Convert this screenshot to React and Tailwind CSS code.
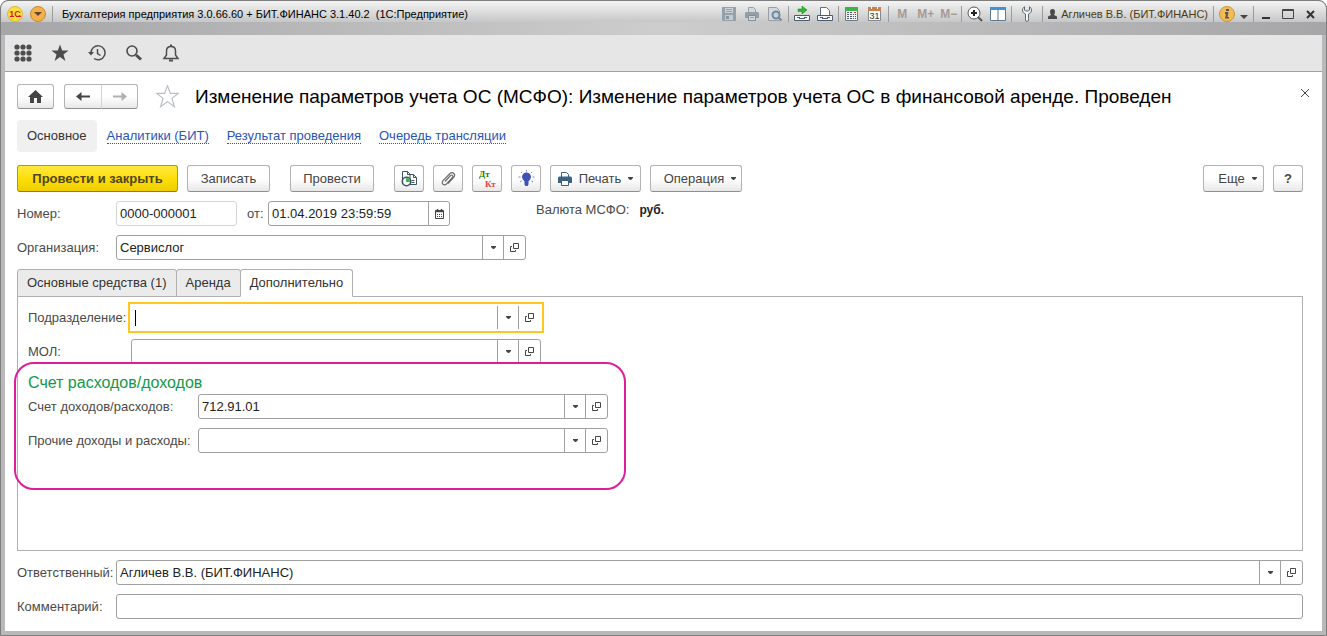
import React, { useState } from "react";

const buttonClass =
  "flex items-center justify-center rounded-[3px] border border-[#b3b3b3] border-b-[#8f8f8f] bg-gradient-to-b from-white from-50% to-[#e8e8e8] text-[13px] text-[#454545]";

const Separator = () => <span className="h-4 w-px shrink-0 bg-[#9c9c9c]" />;

const Caret = () => (
  <svg className="h-1 w-[5px] shrink-0" viewBox="0 0 5 4" fill="#454545">
    <path d="M0 0h5v1L3 3H2L0 1z" />
  </svg>
);

const OpenIcon = () => (
  <svg className="h-[9px] w-[9px]" viewBox="0 0 9 9" fill="none" stroke="#454545">
    <path d="M3.500 0.500h5v5h-5z" />
    <path d="M2 3.500H0.500v5h5V7" />
  </svg>
);

const SaveIcon = () => (
  <svg className="h-4 w-4" viewBox="0 0 16 16">
    <path d="M1 1h14v14H2l-1-1z" fill="#94a1ac" />
    <path d="M4 2h8v5H4z" fill="#ccd2d6" />
    <path d="M5 3.500h6M5 5.500h6" stroke="#94a1ac" />
    <path d="M4 9h8v5H4z" fill="#c3cad0" />
    <path d="M5 10h3v3H5z" fill="#8795a2" />
  </svg>
);

const TitlePrinterIcon = () => (
  <svg className="h-4 w-4" viewBox="0 0 16 16">
    <path d="M4.500 1.500h5l2 2v3h-7z" fill="#d5d9dc" stroke="#93a0aa" />
    <path d="M2 6h12l1 1v5H1V7z" fill="#93a0aa" />
    <path d="M4.500 9.500h7v5h-7z" fill="#d5d9dc" stroke="#7f8e9a" />
    <path d="M6 11.500h4" stroke="#93a0aa" />
  </svg>
);

const PreviewIcon = () => (
  <svg className="h-4 w-4" viewBox="0 0 16 16" fill="none">
    <path d="M1.500 1.500h8l3 3v10h-11z" fill="#d4d8db" stroke="#93a0aa" />
    <circle cx="9" cy="9" r="3.500" fill="#c5d2da" stroke="#73899a" strokeWidth="2" />
    <path d="M11.500 11.500l3 3" stroke="#73899a" strokeWidth="2" />
  </svg>
);

const LinkIcon = ({ children }) => (
  <svg className="h-4 w-4" viewBox="0 0 16 16" fill="none">
    {children}
    <path d="M0.500 9.500h15v5h-15z" fill="#f5f7f9" stroke="#4d5b6b" />
    <path d="M3 11.500h3M10 11.500h3" stroke="#4d5b6b" />
    <path d="M5 12.500h6" stroke="#4d5b6b" />
  </svg>
);

const CalculatorIcon = () => (
  <svg className="h-4 w-4" viewBox="0 0 16 16">
    <path d="M1.500 1.500h12v13h-12z" fill="#f3f3f3" stroke="#6d7a85" />
    <path d="M1 1h13v4H1z" fill="#3fb14b" />
    <path
      d="M3 6.500h2M6 6.500h2M3 8.500h2M6 8.500h2M9 8.500h1M3 10.500h2M6 10.500h2M9 10.500h1M3 12.500h2M6 12.500h2M9 12.500h1M11 8.500h1M11 10.500h1M11 12.500h1"
      stroke="#4d5b66"
    />
    <path d="M10 6.500h2" stroke="#e03030" />
  </svg>
);

const TitleCalendarIcon = () => (
  <svg className="h-4 w-4" viewBox="0 0 16 16">
    <path d="M1.500 2.500h12v12h-12z" fill="#fbfbfb" stroke="#7d8992" />
    <path d="M1 1h13v4H1z" fill="#c68350" />
    <path d="M4.500 0v3M10.500 0v3" stroke="#fff" />
    <text x="7.500" y="13" textAnchor="middle" fontSize="9" fontFamily="Liberation Sans" fill="#333">
      31
    </text>
  </svg>
);

const ZoomIcon = () => (
  <svg className="h-4 w-4" viewBox="0 0 16 16" fill="none">
    <circle cx="7" cy="7" r="6" fill="#fff" stroke="#555" />
    <path d="M4 7h6M7 4v6" stroke="#222" strokeWidth="2" />
    <path d="M11 11l4 4" stroke="#555" strokeWidth="2" />
  </svg>
);

const PanelsIcon = () => (
  <svg className="h-4 w-4" viewBox="0 0 16 16">
    <path d="M0.500 1.500h15v13h-15z" fill="#fff" stroke="#61788c" />
    <path d="M0 1h16v3H0z" fill="#3d93e0" />
    <path d="M8 4v11" stroke="#61788c" />
  </svg>
);

const WrenchIcon = () => (
  <svg className="h-4 w-3" viewBox="0 0 12 16" fill="#f6f6f6" stroke="#5b6873">
    <path d="M3.500 0.800Q1 2 1.500 5 2 7 4.500 8v4.500q-.5 3 1.500 3t1.500-3V8Q10 7 10.500 5 11 2 8.500 0.800V4L7.500 5h-3l-1-1z" />
  </svg>
);

const UserIcon = () => (
  <svg className="h-[11px] w-[9px]" viewBox="0 0 9 11" fill="#4a4a4a">
    <path d="M2 2.500Q2 0 4.500 0T7 2.500q0 2-1 3.500l3 1.500V10H0V7.500L3 6q-1-1.500-1-3.500z" />
  </svg>
);

const TitleBar = () => (
  <header className="h-[34px] shrink-0 bg-gradient-to-r from-[#a6a6a9] via-[#cdcdcd] to-[#a6a6a9] text-[11px]">
    <div className="flex h-[21px] items-end rounded-t-lg bg-gradient-to-b from-[#f4f4f4] to-[#c6c7c8] px-[5px]">
      <div className="flex h-4 min-w-0 flex-1 items-center">
        <svg className="h-4 w-[18px] shrink-0" viewBox="0 0 18 16">
          <circle cx="9" cy="8" r="7.500" fill="#f9e03c" stroke="#d8b93a" />
          <text x="9" y="11" textAnchor="middle" fontSize="9" fontWeight="bold" fontFamily="Liberation Sans" fill="#e0181c">
            1С
          </text>
          <path d="M10 10.500h5" stroke="#e0181c" />
        </svg>
        <button type="button" aria-label="Главное меню" className="ml-1.5">
          <svg className="h-4 w-4" viewBox="0 0 16 16">
            <circle cx="8" cy="8" r="7.500" fill="#f3b04b" stroke="#c98a2d" />
            <path d="M4 6h8l-4 4z" fill="#60452a" />
          </svg>
        </button>
        <span className="ml-1.5 h-4 w-px shrink-0 bg-[#9c9c9c]" />
        <span className="ml-[9px] truncate whitespace-pre text-black">
          Бухгалтерия предприятия 3.0.66.60 + БИТ.ФИНАНС 3.1.40.2  (1С:Предприятие)
        </span>
      </div>
      <div className="flex h-4 shrink-0 items-center gap-[5px]">
        <div className="flex gap-[7px]">
          <button type="button" aria-label="Сохранить"><SaveIcon /></button>
          <button type="button" aria-label="Печать"><TitlePrinterIcon /></button>
          <button type="button" aria-label="Просмотр"><PreviewIcon /></button>
        </div>
        <Separator />
        <div className="flex gap-[7px]">
          <button type="button" aria-label="Перейти по ссылке">
            <LinkIcon>
              <path d="M4 3h4V0l5 4-5 4V5.500H4z" fill="#2fb92f" stroke="#177d17" strokeWidth="0.500" />
            </LinkIcon>
          </button>
          <button type="button" aria-label="Получить ссылку">
            <LinkIcon>
              <path d="M3.500 9V1.500h6l3 3V9" fill="#fff" stroke="#5f7285" />
            </LinkIcon>
          </button>
        </div>
        <Separator />
        <div className="flex gap-[7px]">
          <button type="button" aria-label="Калькулятор"><CalculatorIcon /></button>
          <button type="button" aria-label="Календарь"><TitleCalendarIcon /></button>
        </div>
        <Separator />
        <div className="flex gap-[7px] text-[12px] font-bold text-[#a89a90]">
          <button type="button" className="w-4">M</button>
          <button type="button" className="w-4">M+</button>
          <button type="button" className="w-4">M−</button>
        </div>
        <Separator />
        <div className="flex gap-[7px]">
          <button type="button" aria-label="Масштаб"><ZoomIcon /></button>
          <button type="button" aria-label="Панели"><PanelsIcon /></button>
        </div>
        <Separator />
        <button type="button" aria-label="Настройки" className="px-1"><WrenchIcon /></button>
        <Separator />
        <button type="button" className="flex items-center gap-1 text-[#4d3a10]">
          <UserIcon />
          Агличев В.В. (БИТ.ФИНАНС)
        </button>
        <Separator />
        <button type="button" aria-label="Информация">
          <svg className="h-4 w-4" viewBox="0 0 16 16">
            <circle cx="8" cy="8" r="7.500" fill="#f2bb55" stroke="#c9953d" />
            <path d="M7 3h3v2H7zM6 6h3.500L8.500 11H10v1.500H6L7 8H6z" fill="#5d5648" />
          </svg>
        </button>
        <button type="button" aria-label="Еще" className="pt-1.5">
          <svg className="h-1 w-2" viewBox="0 0 8 4" fill="#444"><path d="M0 0h8L4 4z" /></svg>
        </button>
        <Separator />
        <div className="flex items-center gap-3 pr-1.5 pl-[3px]">
          <button type="button" aria-label="Свернуть" className="pt-1.5">
            <svg className="h-[3px] w-2" viewBox="0 0 8 3"><path d="M0 1h8v2H0z" fill="#333" /></svg>
          </button>
          <button type="button" aria-label="Развернуть">
            <svg className="h-2.5 w-3" viewBox="0 0 12 10"><path d="M.5 .5h11v9H.5zM0 1.500h12" fill="none" stroke="#444" /></svg>
          </button>
          <button type="button" aria-label="Закрыть">
            <svg className="h-[9px] w-[9px]" viewBox="0 0 9 9"><path d="M1 1l7 7M8 1L1 8" stroke="#333" strokeWidth="2" /></svg>
          </button>
        </div>
      </div>
    </div>
  </header>
);

const starPath = "M9 0.500l2.200 6h6.300l-5 4 1.900 6.500L9 13l-5.400 4 1.900-6.500-5-4h6.300z";

const ToolBar = () => (
  <nav className="flex h-[37px] shrink-0 items-center gap-[19px] border-b border-[#a0a0a0] bg-[#e6e6e6] pl-[9px]">
    <button type="button" aria-label="Разделы">
      <svg className="h-[18px] w-[18px]" viewBox="0 0 18 18" fill="#4d4d4d">
        {[3, 9, 15].map((y) =>
          [3, 9, 15].map((x) => <circle key={`${x}-${y}`} cx={x} cy={y} r="2.600" />)
        )}
      </svg>
    </button>
    <button type="button" aria-label="Избранное">
      <svg className="h-[18px] w-[18px]" viewBox="0 0 18 18" fill="#4d4d4d"><path d={starPath} /></svg>
    </button>
    <button type="button" aria-label="История">
      <svg className="h-[18px] w-[18px]" viewBox="0 0 18 18" fill="none" stroke="#4d4d4d" strokeWidth="1.500">
        <path d="M3 9A7 7 0 1 1 6 14.500" />
        <path d="M9.500 5v4.500l3 2" />
        <path d="M0 8h6L3 11.500z" fill="#4d4d4d" stroke="none" />
      </svg>
    </button>
    <button type="button" aria-label="Поиск">
      <svg className="h-[18px] w-[18px]" viewBox="0 0 18 18" fill="none" stroke="#4d4d4d">
        <circle cx="7" cy="7" r="5" strokeWidth="1.600" />
        <path d="M11 11l5 4.500" strokeWidth="3" />
      </svg>
    </button>
    <button type="button" aria-label="Уведомления">
      <svg className="h-[18px] w-[18px]" viewBox="0 0 18 18" fill="none" stroke="#4d4d4d" strokeWidth="1.500">
        <path d="M2 14.500h14L13.500 11V7Q13.500 2.500 9 2.500T4.500 7v4z" />
        <path d="M7 16.500h4M9 0.500v2" strokeWidth="2" />
      </svg>
    </button>
  </nav>
);

const FormHeader = () => (
  <div className="flex h-[25px] items-center">
    <button type="button" aria-label="Начальная страница" className={`${buttonClass} h-[25px] w-[37px]`}>
      <svg className="h-[13px] w-[15px]" viewBox="0 0 15 13" fill="#454545">
        <path d="M7.500 0L15 7h-2v6H9V8H6v5H2V7H0z" />
      </svg>
    </button>
    <div className="ml-2.5 flex">
      <button type="button" aria-label="Назад" className={`${buttonClass} h-[25px] w-[38px] rounded-r-none`}>
        <svg className="h-[9px] w-[14px]" viewBox="0 0 14 9"><path d="M0 4.500L5.500 0v3.500H14v2H5.500V9z" fill="#454545" /></svg>
      </button>
      <button type="button" aria-label="Вперед" className={`${buttonClass} -ml-px h-[25px] w-[37px] rounded-l-none border-l-[#d5d5d5]`}>
        <svg className="h-[9px] w-[14px]" viewBox="0 0 14 9"><path d="M14 4.500L8.500 0v3.500H0v2h8.500V9z" fill="#b0b0b0" /></svg>
      </button>
    </div>
    <button type="button" aria-label="В избранное" className="ml-[18px]">
      <svg className="h-[23px] w-[23px]" viewBox="0 0 18 18" fill="none" stroke="#b9bec4" strokeWidth="0.900"><path d={starPath} /></svg>
    </button>
    <h1 className="ml-4 min-w-0 flex-1 truncate text-[19px] leading-6 text-black">
      Изменение параметров учета ОС (МСФО): Изменение параметров учета ОС в финансовой аренде. Проведен
    </h1>
    <button type="button" aria-label="Закрыть форму" className="-mr-2.5 mb-2 p-1">
      <svg className="h-2 w-2" viewBox="0 0 8 8"><path d="M0 0l8 8M8 0L0 8" stroke="#454545" /></svg>
    </button>
  </div>
);

const SectionLinks = () => (
  <nav className="mt-[11px] flex h-8 items-center gap-[18px] text-[13px]">
    <span className="-mr-2 flex h-8 items-center rounded bg-[#f0f0f0] px-2.5 text-[#333]">Основное</span>
    {["Аналитики (БИТ)", "Результат проведения", "Очередь трансляции"].map((title) => (
      <a key={title} href="#" className="border-b border-dotted border-[#2b54b5] leading-[14px] text-[#2b54b5]">
        {title}
      </a>
    ))}
  </nav>
);

const CommandBar = () => (
  <div className="mt-[13px] flex">
    <button
      type="button"
      className="h-[27px] w-[161px] rounded-[3px] border border-[#b09a10] border-b-[#8f7d0c] bg-gradient-to-b from-[#ffe838] via-[#fddf05] to-[#efcd00] text-[13px] font-bold text-[#504620]"
    >
      Провести и закрыть
    </button>
    <button type="button" className={`${buttonClass} ml-[9px] h-[27px] w-[83px]`}>Записать</button>
    <button type="button" className={`${buttonClass} ml-5 h-[27px] w-[84px]`}>Провести</button>
    <div className="ml-5 flex gap-[9px]">
      <button type="button" aria-label="Отчет" className={`${buttonClass} h-[27px] w-[30px]`}>
        <svg className="h-[17px] w-[17px]" viewBox="0 0 17 17" fill="none" stroke="#3e5463">
          <path d="M1.500 9V1.500h5l3 3M8.500 4.500h4l3 3v7H9V4.500" fill="#fff" />
          <path d="M6.500 1.500v3h3M12.500 4.500v3h3M10.500 10.500h3M10.500 12.500h3" />
          <circle cx="5.500" cy="11.500" r="4.200" fill="#fff" strokeWidth="1.600" />
          <path d="M5.500 11.500v-3a3 3 0 0 1 3 3z" fill="#2eb84b" stroke="#2eb84b" />
        </svg>
      </button>
      <button type="button" aria-label="Файлы" className={`${buttonClass} h-[27px] w-[30px]`}>
        <svg className="h-4 w-4" viewBox="0 0 16 16" fill="none" stroke="#6c6c6c" strokeWidth="1.200">
          <path d="M5 10.500l5.500-6q1.300-1 2 0t0 2L6.500 13q-2 1.700-3.500.3t0-3.600L9.500 3q2.500-2.300 4.300-.5t-.3 4.200L8 12.500" />
        </svg>
      </button>
      <button type="button" aria-label="Движения документа" className={`${buttonClass} h-[27px] w-[30px]`}>
        <svg className="h-5 w-[17px]" viewBox="0 0 17 20" fontFamily="Liberation Serif" fontWeight="bold" fontSize="9">
          <text x="0" y="8" fill="#267a00">Дт</text>
          <text x="6" y="18" fill="#f03c3c">Кт</text>
        </svg>
      </button>
      <button type="button" aria-label="Подсказки" className={`${buttonClass} h-[27px] w-[30px]`}>
        <svg className="h-[17px] w-[17px]" viewBox="0 0 17 17" fill="#3f51b5">
          <path d="M8.500 2.500a4.500 4.500 0 0 1 4.500 4.500q0 2-2.500 4.500v1h-4v-1Q4 9 4 7a4.500 4.500 0 0 1 4.500-4.500zM6.500 12.500h4v2l-1 1.500h-2l-1-1.500z" />
          <path d="M8.500 0v1.500M3 2l1 1M14 2l-1 1M0.500 7H2.500M14.500 7h2M2 12l1.500-1M15 12l-1.500-1" stroke="#7986cb" />
        </svg>
      </button>
      <button type="button" className={`${buttonClass} h-[27px] w-[91px] gap-[7px]`}>
        <svg className="h-3.5 w-3.5" viewBox="0 0 14 14">
          <path d="M3.500 5V0.500h5l2 2V5" fill="#fff" stroke="#3a5d78" />
          <path d="M1 4.500h12l1 1V11H0V5.500z" fill="#3a6382" />
          <path d="M3.500 8.500h7v5h-7z" fill="#fff" stroke="#3a5d78" />
        </svg>
        Печать
        <Caret />
      </button>
      <button type="button" className={`${buttonClass} h-[27px] w-[92px] gap-[7px] pl-2`}>
        Операция
        <Caret />
      </button>
    </div>
    <div className="ml-auto flex gap-[9px]">
      <button type="button" className={`${buttonClass} h-[27px] w-[61px] gap-[7px] pl-2`}>
        Еще
        <Caret />
      </button>
      <button type="button" className={`${buttonClass} h-[27px] w-[30px] font-bold`}>?</button>
    </div>
  </div>
);

const FieldButtons = () => (
  <>
    <button type="button" aria-label="Выбрать из списка" className="flex w-[21px] shrink-0 items-center justify-center border-l border-[#a0a0a0]">
      <Caret />
    </button>
    <button type="button" aria-label="Открыть" className="flex w-[22px] shrink-0 items-center justify-center border-l border-[#a0a0a0]">
      <OpenIcon />
    </button>
  </>
);

const Field = ({ id, label, labelClass, boxClass, value = "", onlyText, focused }) => {
  const [text, setText] = useState(value);

  const box = (
    <div
      className={`flex h-[25px] bg-white ${
        focused ? "p-px" : "rounded-[3px] border border-[#a0a0a0]"
      } ${boxClass}`}
    >
      {focused && text === "" && <span className="ml-[3px] w-px self-center bg-black h-4" />}
      <input
        id={id}
        value={text}
        onChange={(e) => setText(e.target.value)}
        className="min-w-0 flex-1 px-[3px] text-[13px] text-[#222] outline-none"
      />
      {!onlyText && <FieldButtons />}
    </div>
  );

  return (
    <div className="flex h-[25px] items-center">
      <label htmlFor={id} className={`shrink-0 whitespace-nowrap ${labelClass}`}>
        {label}
      </label>
      {focused ? (
        <div className="-ml-[3px] border-2 border-[#fbc91e] p-px">{box}</div>
      ) : (
        box
      )}
    </div>
  );
};

const DocumentRow = () => (
  <div className="mt-[9px] flex h-[25px] items-center">
    <label htmlFor="number" className="w-[99px]">Номер:</label>
    <input
      id="number"
      defaultValue="0000-000001"
      className="h-[25px] w-[121px] rounded-[3px] border border-[#d5d5d5] px-[3px] text-[#222] outline-none"
    />
    <label htmlFor="date" className="w-[31px] pl-2.5">от:</label>
    <div className="flex h-[25px] w-[182px] rounded-[3px] border border-[#a0a0a0]">
      <input
        id="date"
        defaultValue="01.04.2019 23:59:59"
        className="min-w-0 flex-1 px-[3px] text-[#222] outline-none"
      />
      <button type="button" aria-label="Выбрать дату" className="flex w-[21px] items-center justify-center border-l border-[#a0a0a0]">
        <svg className="h-2.5 w-[9px]" viewBox="0 0 9 10" fill="none" stroke="#454545">
          <path d="M0.500 1.500h8v8h-8z" />
          <path d="M0 2.500h9M2.500 0v2M6.500 0v2" strokeWidth="1.500" />
          <path d="M2 5.500h1M4 5.500h1M6 5.500h1M2 7.500h1M4 7.500h1M6 7.500h1" />
        </svg>
      </button>
    </div>
    <p className="ml-[86px] flex gap-2.5 pb-2">
      Валюта МСФО: <b className="text-[12px] leading-5 text-[#222]">руб.</b>
    </p>
  </div>
);

const tabs = ["Основные средства (1)", "Аренда", "Дополнительно"];

const App = () => {
  const [activeTab, setActiveTab] = useState("Дополнительно");

  return (
    <div className="flex min-h-screen flex-col overflow-hidden rounded-t-lg border border-[#7d7d7d] bg-[#b9b9bb] font-['Liberation_Sans',Arial,sans-serif]">
      <TitleBar />
      <div className="mx-1 mb-1 flex flex-1 flex-col bg-white">
        <ToolBar />
        <main className="flex flex-1 flex-col pt-3 pr-[19px] pb-3 pl-3 text-[13px] text-[#4a4a4a]">
          <FormHeader />
          <SectionLinks />
          <CommandBar />
          <DocumentRow />
          <div className="mt-[9px]">
            <Field id="org" label="Организация:" labelClass="w-[99px]" boxClass="w-[410px]" value="Сервислог" />
          </div>

          <div role="tablist" className="relative mt-[9px] -mb-px flex">
            {tabs.map((tab) => (
              <button
                key={tab}
                type="button"
                role="tab"
                aria-selected={tab === activeTab}
                onClick={() => setActiveTab(tab)}
                className={`-mr-px h-7 rounded-t-[3px] border border-[#b0b0b0] px-[9px] text-[#333] ${
                  tab === activeTab ? "border-b-white bg-white" : "bg-[#ebebeb]"
                }`}
              >
                {tab}
              </button>
            ))}
          </div>
          <section className="flex-1 border border-[#b0b0b0] pt-2 pl-2.5">
            <Field id="dept" label="Подразделение:" labelClass="w-[103px]" boxClass="w-[410px]" focused />
            <div className="mt-[9px]">
              <Field id="mol" label="МОЛ:" labelClass="w-[103px]" boxClass="w-[410px]" />
            </div>
            <div className="relative mt-2 w-[580px]">
              <div className="pointer-events-none absolute -top-2.5 -right-[18px] -left-3.5 h-32 rounded-[20px] border-2 border-[#dc1e9b]" />
              <h2 className="text-[16px] leading-[22px] text-[#109a48]">Счет расходов/доходов</h2>
              <div className="flex flex-col gap-[9px]">
                <Field id="account" label="Счет доходов/расходов:" labelClass="w-[170px]" boxClass="w-[410px]" value="712.91.01" />
                <Field id="other" label="Прочие доходы и расходы:" labelClass="w-[170px]" boxClass="w-[410px]" />
              </div>
            </div>
          </section>

          <div className="mt-[9px] flex flex-col gap-[9px]">
            <Field id="responsible" label="Ответственный:" labelClass="w-[99px]" boxClass="min-w-0 flex-1" value="Агличев В.В. (БИТ.ФИНАНС)" />
            <Field id="comment" label="Комментарий:" labelClass="w-[99px]" boxClass="min-w-0 flex-1" onlyText />
          </div>
        </main>
      </div>
    </div>
  );
};

export default App;
